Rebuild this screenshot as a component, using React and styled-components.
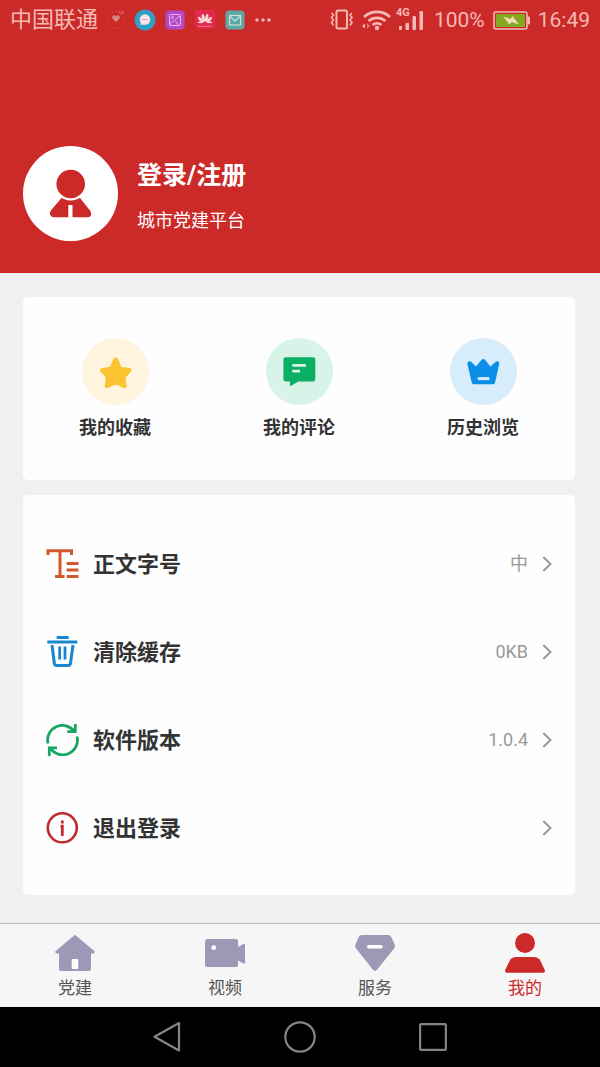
import React from "react";
import styled, { createGlobalStyle } from "styled-components";

const GlobalStyle = createGlobalStyle`
  * { box-sizing: border-box; }
  body {
    margin: 0;
    background: #f0f0f0;
    font-family: Roboto, "Noto Sans CJK SC", sans-serif;
    color: #333;
  }
  button { font: inherit; color: inherit; border: 0; padding: 0; background: none; cursor: pointer; }
  a { color: inherit; text-decoration: none; }
  svg { display: block; flex: none; }
`;

const Screen = styled.div`
  min-height: 100vh;
  display: flex;
  flex-direction: column;
`;

const Header = styled.header`
  background: #cc2a29;
  color: #fff;
`;

const StatusBar = styled.div`
  display: flex;
  align-items: center;
  justify-content: space-between;
  height: 40px;
  padding: 0 10px;
  line-height: 26px;
  color: #f5b9b5;
`;

const StatusGroup = styled.div`
  display: flex;
  align-items: center;
  gap: ${(p) => p.$gap}px;
  font-size: ${(p) => p.$size}px;
`;

const Profile = styled.section`
  display: flex;
  align-items: center;
  gap: 19px;
  padding: 106px 23px 32px;
`;

const Avatar = styled.div`
  width: 95px;
  height: 95px;
  border-radius: 50%;
  background: #fff;
  overflow: hidden;
`;

const ProfileText = styled.div`
  display: flex;
  flex-direction: column;
  align-items: flex-start;
  gap: 17px;
  padding-top: 5px;
`;

const LoginButton = styled.button`
  font-size: 25px;
  line-height: 32px;
  font-weight: 700;
`;

const Subtitle = styled.p`
  margin: 0;
  font-size: 18px;
  line-height: 24px;
`;

const Main = styled.main`
  flex: 1;
  display: flex;
  flex-direction: column;
  gap: 15px;
  padding: 24px 25px 28px 23px;
`;

const ShortcutCard = styled.section`
  display: grid;
  grid-template-columns: repeat(3, 1fr);
  padding: 41px 0 40px;
  background: #fefefe;
  border-radius: 5px;
`;

const Shortcut = styled.button`
  display: flex;
  flex-direction: column;
  align-items: center;
  gap: 11px;
  font-size: 18px;
  line-height: 24px;
  font-weight: 700;
`;

const ShortcutDisc = styled.span`
  width: 67px;
  height: 67px;
  border-radius: 50%;
  background: ${(p) => p.$tint};
`;

const SettingList = styled.ul`
  margin: 0;
  padding: 25px 0 23px;
  list-style: none;
  background: #fefefe;
  border-radius: 5px;
`;

const SettingRow = styled.button`
  display: flex;
  align-items: center;
  width: 100%;
  height: 88px;
  padding: 0 23px;
  text-align: left;
`;

const SettingLabel = styled.span`
  flex: 1;
  margin-left: 14px;
  padding-top: 2px;
  font-size: 22px;
  line-height: 28px;
  font-weight: 700;
`;

const SettingValue = styled.span`
  margin-right: 14px;
  font-size: 18px;
  line-height: 24px;
  color: #999;
`;

const TabBar = styled.nav`
  display: grid;
  grid-template-columns: repeat(4, 1fr);
  height: 84px;
  border-top: 1px solid #bdbdbd;
  background: #f6f6f6;
`;

const Tab = styled.a`
  display: flex;
  flex-direction: column;
  align-items: center;
  gap: 4px;
  padding-top: 9px;
  font-size: 17px;
  line-height: 22px;
  color: ${(p) => (p.$active ? "#cc2a29" : "#555")};
`;

const SystemBar = styled.footer`
  display: flex;
  justify-content: center;
  height: 60px;
  background: #000;
`;

const SystemKeys = styled.div`
  display: grid;
  grid-template-columns: repeat(3, 1fr);
  width: 100%;
  max-width: 400px;
`;

const SystemKey = styled.button`
  display: flex;
  align-items: center;
  justify-content: center;
`;

const HeartIcon = () => (
  <svg width="18" height="22" viewBox="1 0 18 22">
    <circle cx="10" cy="11" r="8.500" fill="none" stroke="#d9504c" strokeWidth="1" strokeDasharray="2 3" />
    <path d="M10 13 L6.500 9.500 C5 7 8.500 5 10 7.500 C11.500 5 15 7 13.500 9.500 Z" fill="#d98580" />
    <path d="M13 3 l3 2 M16 1.500 l2 3" stroke="#d98580" strokeWidth="1" />
  </svg>
);

const ChatAppIcon = () => (
  <svg width="22" height="22" viewBox="0 0 22 22">
    <circle cx="11" cy="11" r="10.500" fill="#2f9fc4" />
    <circle cx="11" cy="10.500" r="5.300" fill="#fbe4e6" />
    <path d="M7 13 L6.500 16 L11 15 Z" fill="#fbe4e6" />
    <path d="M8.300 10.500 h5.400" stroke="#b98a9c" strokeWidth="1.200" strokeDasharray="1.200 .8" />
  </svg>
);

const GalleryIcon = () => (
  <svg width="20" height="20" viewBox="0 0 20 20">
    <rect x="0.500" y="0.500" width="19" height="19" rx="4" fill="#b349c8" />
    <g fill="none" stroke="#efb6e6" strokeWidth="1">
      <rect x="4.500" y="4.500" width="11" height="11" rx="1" />
      <path d="M5 15 C5.500 11.500 8 11.500 9.500 10.500 C11.500 9.500 12 7 15 6.500 M10.500 11.500 L13.500 15" />
      <circle cx="7.500" cy="7.500" r="1" />
    </g>
  </svg>
);

const FlowerIcon = () => (
  <svg width="22" height="20" viewBox="0 0 22 20">
    <rect x="0.500" y="0" width="21" height="19" rx="4" fill="#e2284c" />
    <g fill="#fbd5d8">
      <ellipse cx="9.300" cy="8" rx="1.500" ry="4" transform="rotate(-12 9.300 8)" />
      <ellipse cx="12.700" cy="8" rx="1.500" ry="4" transform="rotate(12 12.700 8)" />
      <ellipse cx="6.700" cy="9.700" rx="1.400" ry="3.700" transform="rotate(-42 6.700 9.700)" />
      <ellipse cx="15.300" cy="9.700" rx="1.400" ry="3.700" transform="rotate(42 15.300 9.700)" />
      <ellipse cx="6.500" cy="12.300" rx="2.800" ry=".9" />
      <ellipse cx="15.500" cy="12.300" rx="2.800" ry=".9" />
    </g>
    <path d="M4.500 16.300 h13" stroke="#ee8291" strokeWidth="1.200" strokeDasharray="1.500 .5" />
  </svg>
);

const MailIcon = () => (
  <svg width="20" height="20" viewBox="0 0 20 20">
    <rect x="0.500" y="0.500" width="19" height="19" rx="4" fill="#5fa9a4" />
    <g fill="none" stroke="#cfe2dc" strokeWidth="1.100">
      <rect x="4.500" y="5.500" width="11" height="9.500" />
      <path d="M4.500 6 L10 11 L15.500 6" />
    </g>
  </svg>
);

const MoreIcon = () => (
  <svg width="18" height="6" viewBox="-1 0 18 6" fill="#f5b9b5">
    <circle cx="2" cy="3" r="1.700" />
    <circle cx="8" cy="3" r="1.700" />
    <circle cx="14" cy="3" r="1.700" />
  </svg>
);

const VibrateIcon = () => (
  <svg width="24" height="22" viewBox="0 0 24 22" fill="none" stroke="#f5b9b5">
    <rect x="6.500" y="1.500" width="10.500" height="18" rx="1.500" strokeWidth="2" />
    <path d="M1.500 4 l2 2 l-2 2.500 l2 2.500 l-2 2.500 l2 3 M22 4 l-2 2 l2 2.500 l-2 2.500 l2 2.500 l-2 3" strokeWidth="1.600" />
  </svg>
);

const WifiIcon = () => (
  <svg width="29" height="22" viewBox="1 0 29 22" fill="none" stroke="#f5b9b5">
    <path d="M3 8 A19 19 0 0 1 29 8" strokeWidth="2.600" />
    <path d="M7.500 12 A13 13 0 0 1 24.500 12" strokeWidth="2.600" />
    <path d="M11.500 16 A7 7 0 0 1 20.500 16" strokeWidth="2.600" />
    <circle cx="16" cy="19" r="2.200" fill="#f5b9b5" stroke="none" />
    <path d="M4 14.500 L1 17 L4 19.500 Z" fill="#f5b9b5" stroke="none" />
    <path d="M6 14 L9 17 L6 20 Z" fill="#e27773" stroke="none" />
  </svg>
);

const SignalBox = styled.span`
  position: relative;
  display: block;
`;

const NetworkTag = styled.span`
  position: absolute;
  top: -1px;
  left: -3px;
  font-size: 11px;
  line-height: 12px;
  font-weight: 700;
`;

const SignalIcon = () => (
  <SignalBox>
    <NetworkTag>4G</NetworkTag>
    <svg width="27" height="24" viewBox="0 0 27 24" fill="#f5b9b5">
      <rect x="0" y="18" width="3" height="4" rx="1" />
      <rect x="6.500" y="15" width="3.500" height="7" rx="1" />
      <rect x="13.500" y="8" width="3.500" height="14" rx="1" />
      <rect x="20.500" y="3" width="3.500" height="19" rx="1" />
    </svg>
  </SignalBox>
);

const BatteryIcon = () => (
  <svg width="37" height="19" viewBox="0 0 37 19">
    <rect x="1" y="1" width="33" height="17" rx="2" fill="#cc2a29" stroke="#f5b9b5" strokeWidth="1.600" />
    <rect x="3" y="3" width="29" height="13" fill="#84a822" />
    <rect x="34.500" y="5.500" width="2.500" height="8" rx="1" fill="#f5b9b5" />
    <path d="M10 5.500 L17.500 8 L19.500 5 L26 13.500 L18.500 11 L16.500 13.500 Z" fill="#f3ddb8" />
  </svg>
);

const AvatarIcon = () => (
  <svg width="95" height="95" viewBox="0 0 95 95">
    <path
      d="M38.500 52 L27.800 64.500 Q26 68 28 70 Q29 71.200 31 71.200 H45.300 V59 H49.500 V71.200 H65 Q67 71.200 68 69.500 Q69 67.500 67 64.500 L57 52 Z"
      fill="#cc2a29"
    />
    <circle cx="47.700" cy="38" r="16.500" fill="#fff" />
    <circle cx="47.700" cy="38" r="14.300" fill="#cc2a29" />
  </svg>
);

const StarIcon = () => (
  <svg width="67" height="67" viewBox="0 0 67 67">
    <path
      d="M33.700 21.500 L38 30.800 L47.200 32.200 L41.300 38.800 L42.500 48 L33.700 43.700 L24.900 48 L26.100 38.800 L20.200 32.200 L29.400 30.800 Z"
      fill="#fcc430"
      stroke="#fcc430"
      strokeWidth="4.400"
      strokeLinejoin="round"
    />
  </svg>
);

const CommentIcon = () => (
  <svg width="67" height="67" viewBox="0 0 67 67">
    <path
      d="M19.800 19.300 H47 Q49.300 19.300 49.300 21.600 V41.300 Q49.300 43.600 47 43.600 H32.300 L24.800 47.900 Q24 48.200 24 47.300 V43.600 H19.800 Q17.400 43.600 17.400 41.300 V21.600 Q17.400 19.300 19.800 19.300 Z"
      fill="#0bb065"
    />
    <path d="M26.300 27.400 H40 M26.300 33.200 H34" stroke="#d8f4e8" strokeWidth="2.800" />
  </svg>
);

const CrownIcon = () => (
  <svg width="67" height="67" viewBox="0 0 67 67">
    <path
      d="M17.400 26 Q17.200 23.300 19.600 23.300 Q20.700 23.300 21.600 24.200 L26 28.400 L31 22.400 Q33.300 19.800 35.600 22.400 L40.400 28.400 L45.200 24.200 Q46.200 23.300 47.300 23.300 Q49.600 23.500 49.200 26 L45 44.800 Q44.700 46.200 43.300 46.200 H23.500 Q22.100 46.200 21.800 44.800 Z"
      fill="#0b8ee8"
    />
    <path d="M27.700 40.600 H39.300" stroke="#d8edfb" strokeWidth="3" />
  </svg>
);

const FontSizeIcon = () => (
  <svg width="33" height="32" viewBox="0 0 33 32" fill="none" stroke="#d0592f" strokeWidth="3">
    <path d="M2 7 V2.700 H25.500 V7 M14 2.700 V28.500 M9 28.500 H18.500 M20.700 15.500 H32.500 M20.700 22 H32.500 M20.700 28.500 H32.500" />
  </svg>
);

const TrashIcon = () => (
  <svg width="33" height="32" viewBox="0 0 33 32" fill="none" stroke="#1787cf">
    <path d="M10.700 1.500 H22.700 M1.300 6 H31.300" strokeWidth="3" />
    <path d="M6 9 L8.300 27.300 Q8.600 29.500 10.800 29.500 H22 Q24.200 29.500 24.500 27.300 L27 9" strokeWidth="3" />
    <path d="M13.700 10.500 V23.500 M19 10.500 V23.500" strokeWidth="2.800" />
  </svg>
);

const RefreshIcon = () => (
  <svg width="33" height="32" viewBox="0 0 33 32" fill="none" stroke="#15a864" strokeWidth="2.800">
    <path d="M2 19.500 A14.700 14.700 0 0 1 28.300 7.600 M29.300 0 V7.600 H21.300" />
    <path d="M31 12.500 A14.700 14.700 0 0 1 4.200 23.800 M3.300 32 V23.800 H11" />
  </svg>
);

const InfoIcon = () => (
  <svg width="33" height="32" viewBox="0 0 33 32" fill="none" stroke="#c0292d">
    <circle cx="16.300" cy="15.800" r="14.500" strokeWidth="2.600" />
    <path d="M16.300 8.500 V11.500 M14.500 14.200 H16.300 V24" strokeWidth="2.800" />
  </svg>
);

const Chevron = () => (
  <svg width="10" height="16" viewBox="0 0 10 16" fill="none" stroke="#999" strokeWidth="2">
    <path d="M1.300 1 L8.500 8 L1.300 15" />
  </svg>
);

const HomeIcon = () => (
  <svg width="40" height="40" viewBox="0 0 40 40" fill="#9c99b6">
    <path d="M20 1.800 L39.800 18.500 Q40 20.500 38 20.500 H36 V35.500 Q36 38 33.500 38 H6.500 Q4 38 4 35.500 V20.500 H2 Q0 20.500 .2 18.500 Z" />
    <rect x="16.700" y="26" width="6.600" height="10" rx="1" fill="#fff" />
  </svg>
);

const VideoIcon = () => (
  <svg width="40" height="40" viewBox="0 0 40 40" fill="#9c99b6">
    <rect x="0" y="6" width="33" height="28" rx="2.500" />
    <path d="M32 14.500 L38.500 11 Q40 10.500 40 12 V29.500 Q40 31 38.500 30.500 L32 27 Z" />
    <circle cx="8.700" cy="14.700" r="2.400" fill="#fff" />
  </svg>
);

const ServiceIcon = () => (
  <svg width="40" height="40" viewBox="0 0 40 40" fill="#9c99b6">
    <path d="M7 2 H33 Q35.300 2 36.300 4 L39.600 11.500 Q40.400 13.500 39 15.500 L22 36.800 Q20 39 18 36.800 L1 15.500 Q-.4 13.500 .4 11.500 L3.700 4 Q4.700 2 7 2 Z" />
    <path d="M13.800 13.800 H26" stroke="#fff" strokeWidth="3.600" strokeLinecap="round" />
  </svg>
);

const MineIcon = () => (
  <svg width="40" height="40" viewBox="0 0 40 40" fill="#cc2a29">
    <circle cx="20" cy="10" r="10" />
    <path d="M11.500 24 H28.500 Q33.500 24 35.500 28 L39.800 37 Q40.500 39.800 38 39.800 H2 Q-.5 39.800 .2 37 L4.500 28 Q6.500 24 11.500 24 Z" />
  </svg>
);

const BackKeyIcon = () => (
  <svg width="28" height="32" viewBox="0 0 28 32" fill="none" stroke="#858585" strokeWidth="2.200" strokeLinejoin="round">
    <path d="M26 2 V29.500 L1.500 15.800 Z" />
  </svg>
);

const HomeKeyIcon = () => (
  <svg width="32" height="32" viewBox="0 0 32 32" fill="none" stroke="#858585" strokeWidth="2.200">
    <circle cx="16" cy="16" r="14.700" />
  </svg>
);

const RecentKeyIcon = () => (
  <svg width="28" height="28" viewBox="0 0 28 28" fill="none" stroke="#858585" strokeWidth="2.200">
    <rect x="1.100" y="1.100" width="25.800" height="25.800" rx="1" />
  </svg>
);

const shortcuts = [
  { label: "我的收藏", tint: "#fff5df", Icon: StarIcon },
  { label: "我的评论", tint: "#d8f3e7", Icon: CommentIcon },
  { label: "历史浏览", tint: "#d8edfb", Icon: CrownIcon },
];

const settings = [
  { label: "正文字号", value: "中", Icon: FontSizeIcon },
  { label: "清除缓存", value: "0KB", Icon: TrashIcon },
  { label: "软件版本", value: "1.0.4", Icon: RefreshIcon },
  { label: "退出登录", value: "", Icon: InfoIcon },
];

const tabs = [
  { label: "党建", Icon: HomeIcon },
  { label: "视频", Icon: VideoIcon },
  { label: "服务", Icon: ServiceIcon },
  { label: "我的", Icon: MineIcon, active: true },
];

const systemKeys = [
  { name: "返回", Icon: BackKeyIcon },
  { name: "主屏幕", Icon: HomeKeyIcon },
  { name: "最近任务", Icon: RecentKeyIcon },
];

export default function App() {
  return (
    <Screen lang="zh-CN">
      <GlobalStyle />
      <Header>
        <StatusBar>
          <StatusGroup $gap={9} $size={22}>
            <span>中国联通</span>
            <HeartIcon />
            <ChatAppIcon />
            <GalleryIcon />
            <FlowerIcon />
            <MailIcon />
            <MoreIcon />
          </StatusGroup>
          <StatusGroup $gap={8} $size={21}>
            <VibrateIcon />
            <WifiIcon />
            <SignalIcon />
            <span>100%</span>
            <BatteryIcon />
            <span>16:49</span>
          </StatusGroup>
        </StatusBar>
        <Profile>
          <Avatar>
            <AvatarIcon />
          </Avatar>
          <ProfileText>
            <LoginButton type="button">登录/注册</LoginButton>
            <Subtitle>城市党建平台</Subtitle>
          </ProfileText>
        </Profile>
      </Header>
      <Main>
        <ShortcutCard>
          {shortcuts.map(({ label, tint, Icon }) => (
            <Shortcut key={label} type="button">
              <ShortcutDisc $tint={tint}>
                <Icon />
              </ShortcutDisc>
              {label}
            </Shortcut>
          ))}
        </ShortcutCard>
        <SettingList>
          {settings.map(({ label, value, Icon }) => (
            <li key={label}>
              <SettingRow type="button">
                <Icon />
                <SettingLabel>{label}</SettingLabel>
                {value && <SettingValue>{value}</SettingValue>}
                <Chevron />
              </SettingRow>
            </li>
          ))}
        </SettingList>
      </Main>
      <TabBar>
        {tabs.map(({ label, Icon, active }) => (
          <Tab key={label} href="#" $active={active} aria-current={active ? "page" : undefined}>
            <Icon />
            {label}
          </Tab>
        ))}
      </TabBar>
      <SystemBar>
        <SystemKeys>
          {systemKeys.map(({ name, Icon }) => (
            <SystemKey key={name} type="button" aria-label={name}>
              <Icon />
            </SystemKey>
          ))}
        </SystemKeys>
      </SystemBar>
    </Screen>
  );
}
